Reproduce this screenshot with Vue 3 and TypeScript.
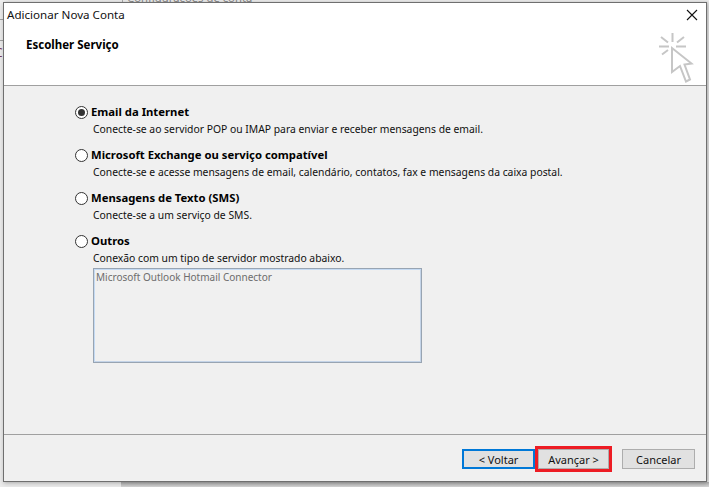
<script setup lang="ts">
interface Option { title: string; desc: string; checked?: boolean }
const options: Option[] = [
  { title: 'Email da Internet', desc: 'Conecte-se ao servidor POP ou IMAP para enviar e receber mensagens de email.', checked: true },
  { title: 'Microsoft Exchange ou serviço compatível', desc: 'Conecte-se e acesse mensagens de email, calendário, contatos, fax e mensagens da caixa postal.' },
  { title: 'Mensagens de Texto (SMS)', desc: 'Conecte-se a um serviço de SMS.' },
  { title: 'Outros', desc: 'Conexão com um tipo de servidor mostrado abaixo.' }
]
</script>

<template>
  <div class="desktop">
    <div class="parent-text">Configurações de conta</div>
    <div class="parent-line"></div>
    <div class="parent-box"></div>
    <div class="parent-c">C</div>
    <div class="parent-bottom"></div>
    <section class="window">
      <header class="head">
        <div class="head-text">
          <div class="title">Adicionar Nova Conta</div>
          <h1 class="heading">Escolher Serviço</h1>
        </div>
        <div class="head-icons">
          <svg class="close" width="12" height="12" viewBox="0 0 12 12">
            <path d="M1 1L11 11M11 1L1 11" stroke="#111" stroke-width="1.1" fill="none" />
          </svg>
          <svg class="pointer" width="36" height="52" viewBox="0 0 36 52">
            <g stroke="#c6c6c6" stroke-width="2" fill="none">
              <path d="M14.5 0V9M1 13.5H11M18 13.5H28M3 4L10 9.5M26 4L19 9.5M4 21.5L10 17" />
              <path d="M14 15V39L22 33L28 48.5L32 46.5L26.500 31.500L33.500 30.500Z" stroke-linejoin="miter" />
            </g>
          </svg>
        </div>
      </header>
      <main class="content">
        <div v-for="o in options" :key="o.title" class="option">
          <div class="opt-row">
            <span class="radio" :class="{ on: o.checked }"></span>
            <span class="opt-title">{{ o.title }}</span>
          </div>
          <div class="opt-desc">{{ o.desc }}</div>
        </div>
        <div class="listbox">Microsoft Outlook Hotmail Connector</div>
      </main>
      <footer class="foot">
        <button class="btn back">&lt; Voltar</button>
        <button class="btn next">Avançar &gt;</button>
        <button class="btn cancel">Cancelar</button>
      </footer>
    </section>
  </div>
</template>

<style>
html, body { margin: 0; height: 100%; overflow: hidden; background: #f1f1f1; }
</style>

<style scoped>
.desktop {
  position: relative;
  width: 709px;
  height: 487px;
  overflow: hidden;
  box-sizing: border-box;
  padding: 2px 3px 0 3px;
  font-family: "Noto Sans", "Open Sans", sans-serif;
  font-size: 11px;
  color: #111;
  background: #ededed;
}
.parent-text {
  position: absolute;
  left: 127px;
  top: -10px;
  font-size: 11.300px;
  color: #888;
  white-space: nowrap;
}
.parent-line {
  position: absolute;
  left: 122px;
  top: 0;
  width: 1px;
  height: 3px;
  background: #aaa;
}
.parent-box {
  position: absolute;
  left: -1px;
  top: 19px;
  width: 3px;
  height: 20px;
  border: 1px solid #a0a0a0;
}
.parent-c {
  position: absolute;
  left: -5px;
  top: 44px;
  font-size: 12px;
  color: #7a3a5a;
}
.parent-bottom {
  position: absolute;
  left: 121px;
  top: 482px;
  width: 588px;
  height: 5px;
  background: linear-gradient(#b0b0b0, #d6d6d6);
}
.window {
  position: relative;
  box-sizing: border-box;
  width: 704px;
  height: 480px;
  display: flex;
  flex-direction: column;
  background: #f0f0f0;
  border: 1px solid #6f6f6f;
  box-shadow: 0 2px 5px rgba(0, 0, 0, 0.18), 2px 0 3px rgba(0, 0, 0, 0.14);
}
.head {
  display: flex;
  justify-content: space-between;
  height: 83px;
  box-sizing: border-box;
  background: #fff;
  border-bottom: 1px solid #a0a0a0;
}
.head-text { padding-left: 3px; }
.title {
  margin-top: 4px;
  font-size: 11.600px;
  line-height: 16px;
}
.heading {
  margin: 14px 0 0 19px;
  font-size: 11.500px;
  line-height: 16px;
  font-weight: 700;
  color: #000;
}
.head-icons {
  display: flex;
  flex-direction: column;
  align-items: flex-end;
  padding: 6px 3px 0 0;
}
.close { margin-right: 5px; }
.pointer { margin: 12px 9px 0 0; }
.content {
  flex: 1;
  padding: 17px 0 0 71px;
  border-bottom: 1px solid #a0a0a0;
}
.option { height: 43px; }
.opt-row {
  display: flex;
  align-items: center;
  gap: 3px;
  height: 18px;
}
.radio {
  box-sizing: border-box;
  width: 13px;
  height: 13px;
  border: 1px solid #333;
  border-radius: 50%;
  background: #fff;
  position: relative;
}
.radio.on::after {
  content: "";
  position: absolute;
  inset: 2px;
  border-radius: 50%;
  background: #333;
}
.opt-title {
  font-weight: 700;
  font-size: 11.300px;
  line-height: 16px;
  color: #000;
}
.opt-desc {
  margin-left: 18px;
  font-size: 10.350px;
  line-height: 16px;
}
.listbox {
  box-sizing: border-box;
  width: 329px;
  height: 95px;
  margin: -7px 0 0 18px;
  padding: 1px 2px;
  background: #f0f0f0;
  border: 1px solid #98a4b2;
  box-shadow: inset 1px 1px 0 #c4daf3, inset -1px -1px 0 #c4d4e8;
  color: #6d6d6d;
  font-size: 10px;
  line-height: 15px;
}
.foot {
  height: 46px;
  box-sizing: border-box;
  display: flex;
  align-items: flex-start;
  padding: 14px 0 0 458px;
}
.btn {
  box-sizing: border-box;
  width: 73px;
  height: 20px;
  padding: 0;
  background: #e1e1e1;
  border: 1px solid #adadad;
  font-family: "Noto Sans", sans-serif;
  font-size: 11px;
  color: #111;
}
.back { border: 2px solid #0078d7; }
.next {
  width: 77px;
  height: 26px;
  margin-top: -3px;
  border: 3px solid #ed1c24;
  box-shadow: inset 0 0 0 1px #adadad;
}
.cancel { margin-left: 10px; }
</style>
